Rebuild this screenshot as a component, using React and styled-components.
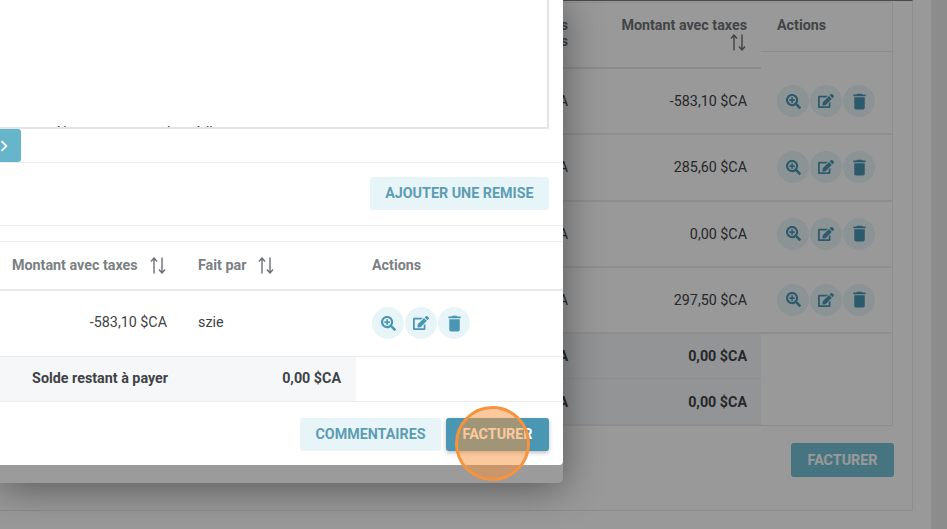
import React from "react";
import styled, { createGlobalStyle } from "styled-components";
import { MdDelete, MdChevronRight } from "react-icons/md";
import { FaEdit, FaSearchPlus } from "react-icons/fa";

const bgRows = [
    { before: "-583,10 $CA", amount: "-583,10 $CA" },
    { before: "285,60 $CA", amount: "285,60 $CA" },
    { before: "0,00 $CA", amount: "0,00 $CA" },
    { before: "297,50 $CA", amount: "297,50 $CA" },
];

function SortIcon() {
    return (
        <SortSvg width="16" height="17" viewBox="0 0 16 17">
            <path d="M4 16.5V1.5M1 4.5L4 1L7 4.5" />
            <path d="M12 .5V15.5M9 12.5L12 16L15 12.5" />
        </SortSvg>
    );
}

function Actions() {
    return (
        <ActionGroup>
            <RoundButton>
                <FaSearchPlus size={15} />
            </RoundButton>
            <RoundButton>
                <FaEdit size={16} />
            </RoundButton>
            <RoundButton>
                <MdDelete size={21} />
            </RoundButton>
        </ActionGroup>
    );
}

export default function App() {
    return (
        <>
            <GlobalStyle />
            <Page>
                <Main>
                    <Card>
                        <BgTable>
                            <BgHead>
                                Montant des
                                <br />
                                taxes
                            </BgHead>
                            <BgHead>
                                Montant avec taxes
                                <BgSort>
                                    <SortIcon />
                                </BgSort>
                            </BgHead>
                            <BgActionsHead>Actions</BgActionsHead>
                            {bgRows.map((row) => (
                                <React.Fragment key={row.amount}>
                                    <BgCell>{row.before}</BgCell>
                                    <BgCell>{row.amount}</BgCell>
                                    <BgActionCell>
                                        <Actions />
                                    </BgActionCell>
                                </React.Fragment>
                            ))}
                            <BgTotal>0,00 $CA</BgTotal>
                            <BgTotal>0,00 $CA</BgTotal>
                            <BgEmpty />
                            <BgTotal>0,00 $CA</BgTotal>
                            <BgTotal>0,00 $CA</BgTotal>
                            <BgEmpty />
                        </BgTable>
                        <BgFooter>
                            <BgInvoice>FACTURER</BgInvoice>
                        </BgFooter>
                    </Card>
                </Main>
                <Strip />
                <Overlay />
                <Modal>
                    <ModalBody>
                        <NoteSection>
                            <NoteBox>
                                <NoteText>Ajouter une note de crédit</NoteText>
                            </NoteBox>
                            <ToggleTab>
                                <MdChevronRight size={22} />
                            </ToggleTab>
                        </NoteSection>
                        <DiscountRow>
                            <LightButton>AJOUTER UNE REMISE</LightButton>
                        </DiscountRow>
                        <Table>
                            <HeadFirst>
                                Montant avec taxes
                                <SortIcon />
                            </HeadFirst>
                            <HeadCell>
                                Fait par
                                <SortIcon />
                            </HeadCell>
                            <HeadCell>Actions</HeadCell>
                            <AmountCell>-583,10 $CA</AmountCell>
                            <BodyCell>szie</BodyCell>
                            <ActionsCell>
                                <Actions />
                            </ActionsCell>
                            <BalanceLabel>Solde restant à payer</BalanceLabel>
                            <BalanceValue>0,00 $CA</BalanceValue>
                        </Table>
                        <Footer>
                            <LightButton>COMMENTAIRES</LightButton>
                            <PrimaryButton>FACTURER</PrimaryButton>
                        </Footer>
                    </ModalBody>
                </Modal>
                <Highlight />
            </Page>
        </>
    );
}

const GlobalStyle = createGlobalStyle`
    html, body {
        margin: 0;
        padding: 0;
    }
    body {
        font-family: Roboto, "Liberation Sans", sans-serif;
        font-size: 14.3px;
        color: #3f4347;
    }
    * {
        box-sizing: border-box;
    }
`;

const Page = styled.div`
    position: relative;
    display: flex;
    width: 947px;
    height: 529px;
    overflow: hidden;
    background: #fff;
`;

const Main = styled.div`
    width: 913px;
    height: 511px;
    padding: 1px 19px 0 0;
    border-top: 1px solid #7a7a7a;
    border-right: 1px solid #ececec;
    border-bottom: 1px solid #ececec;
`;

const Strip = styled.div`
    width: 16px;
    margin-left: 18px;
    background: #eaeaea;
`;

const Overlay = styled.div`
    position: absolute;
    inset: 0;
    background: rgba(0, 0, 0, 0.4);
`;

const Card = styled.div`
    display: flex;
    flex-direction: column;
    align-items: flex-end;
`;

const BgTable = styled.div`
    display: grid;
    grid-template-columns: 282px 179px 131px;
    grid-template-rows: 66px repeat(4, 66.25px) 45px 46px;
    border-top: 1px solid #ebebeb;
    border-right: 1px solid #ebebeb;
    border-bottom: 1px solid #ebebeb;
`;

const BgHead = styled.div`
    padding: 14px 14px 0 0;
    text-align: right;
    font-weight: 700;
    line-height: 16px;
    color: #6f7377;
    border-bottom: 2px solid #e9e9e9;
`;

const BgSort = styled.div`
    display: flex;
    justify-content: flex-end;
    padding: 1px 1px 0 0;
`;

const BgActionsHead = styled.div`
    height: 49px;
    padding: 14px 16px 0;
    font-weight: 700;
    line-height: 16px;
    color: #6f7377;
    border-bottom: 1px solid #ebebeb;
`;

const BgCell = styled.div`
    display: flex;
    align-items: center;
    justify-content: flex-end;
    padding-right: 14px;
    border-bottom: 2px solid #ededed;
`;

const BgActionCell = styled.div`
    display: flex;
    align-items: center;
    padding-left: 16px;
    border-bottom: 2px solid #ededed;
`;

const BgTotal = styled.div`
    display: flex;
    align-items: center;
    justify-content: flex-end;
    padding-right: 14px;
    font-weight: 700;
    background: #f6f7f9;
    border-bottom: 1px solid #ededed;
`;

const BgEmpty = styled.div``;

const BgFooter = styled.div`
    display: flex;
    justify-content: flex-end;
    margin-right: -1px;
    padding-top: 17px;
`;

const BgInvoice = styled.button`
    width: 103px;
    height: 34px;
    padding: 0 0 1px;
    border: none;
    border-radius: 3px;
    background: #76c3d8;
    color: #fff;
    font: 700 14.3px Roboto, sans-serif;
`;

const Modal = styled.div`
    position: absolute;
    top: -1px;
    left: 0;
    width: 563px;
    height: 484px;
    padding-bottom: 18px;
    background: #9b9b9b;
    border-radius: 0 0 5px 0;
    box-shadow: 0 4px 40px rgba(0, 0, 0, 0.45);
`;

const ModalBody = styled.div`
    height: 100%;
    background: #fff;
    border-radius: 0 0 4px 0;
`;

const NoteSection = styled.div`
    height: 164px;
    padding-right: 14px;
    border-bottom: 1px solid #ececec;
`;

const NoteBox = styled.div`
    display: flex;
    align-items: flex-end;
    height: 130px;
    overflow: hidden;
    border-right: 2px solid #e4e4e4;
    border-bottom: 2px solid #e4e4e4;
`;

const NoteText = styled.div`
    padding-left: 54px;
    margin-bottom: -13px;
    line-height: 16px;
    color: #333;
`;

const ToggleTab = styled.div`
    display: flex;
    align-items: center;
    width: 21px;
    height: 33px;
    color: #fff;
    background: #66b5cb;
    border-radius: 0 3px 3px 0;
    svg {
        margin-left: -7px;
    }
`;

const DiscountRow = styled.div`
    display: flex;
    justify-content: flex-end;
    align-items: flex-start;
    height: 63px;
    padding: 14px 14px 0 0;
    border-bottom: 1px solid #ececec;
`;

const Table = styled.div`
    display: grid;
    grid-template-columns: 182px 174px 207px;
    grid-template-rows: 49px 66px 44px;
    margin-top: 15px;
    border-top: 1px solid #ececec;
    border-bottom: 1px solid #ececec;
`;

const HeadCell = styled.div`
    display: flex;
    align-items: center;
    gap: 12px;
    padding: 0 0 1px 16px;
    font-weight: 700;
    color: #7b7f83;
    border-bottom: 2px solid #e9e9e9;
`;

const HeadFirst = styled(HeadCell)`
    padding-left: 12px;
`;

const BodyCell = styled.div`
    display: flex;
    align-items: center;
    padding: 0 0 3px 16px;
    border-bottom: 1px solid #ececec;
`;

const ActionsCell = styled(BodyCell)`
    padding-bottom: 1px;
`;

const AmountCell = styled(BodyCell)`
    justify-content: flex-end;
    padding: 0 15px 3px 0;
`;

const BalanceLabel = styled.div`
    display: flex;
    align-items: center;
    justify-content: flex-end;
    padding: 0 14px 2px 0;
    font-weight: 700;
    background: #f6f7f9;
`;

const BalanceValue = styled(BalanceLabel)`
    padding-right: 15px;
`;

const Footer = styled.div`
    display: flex;
    justify-content: flex-end;
    gap: 5px;
    padding: 16px 14px 0 0;
`;

const LightButton = styled.button`
    height: 33px;
    padding: 0 15.5px 2px;
    border: none;
    border-radius: 3px;
    background: #e8f5f8;
    color: #5d9db4;
    font: 700 14.3px Roboto, sans-serif;
`;

const PrimaryButton = styled(LightButton)`
    width: 103px;
    padding: 0 0 2px;
    background: #4a97b4;
    color: #fff;
    box-shadow: 0 2px 4px rgba(0, 0, 0, 0.25);
`;

const ActionGroup = styled.div`
    display: flex;
    gap: 1px;
`;

const RoundButton = styled.div`
    display: flex;
    align-items: center;
    justify-content: center;
    width: 32px;
    height: 32px;
    border-radius: 50%;
    background: #e8f5f8;
    color: #4a97b4;
`;

const SortSvg = styled.svg`
    flex: none;
    fill: none;
    stroke: #6c7075;
    stroke-width: 1.4;
`;

const Highlight = styled.div`
    position: absolute;
    left: 455px;
    top: 406px;
    width: 75px;
    height: 75px;
    border: 3px solid #f7933c;
    border-radius: 50%;
    background: rgba(247, 147, 60, 0.5);
`;
